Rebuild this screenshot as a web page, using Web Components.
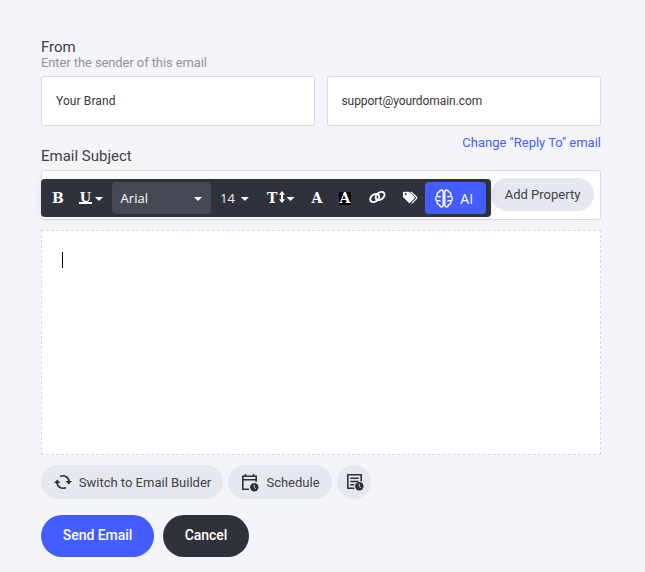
<!DOCTYPE html>
<html lang="en"><head><meta charset="utf-8"><title>Compose email</title>
<style>
html,body{margin:0;background:#f4f5fa}
body{font-family:Roboto,sans-serif;color:#3f4045}
</style></head><body>
<email-composer></email-composer>
<script>
const define=(name,html)=>customElements.define(name,class extends HTMLElement{
  constructor(){super();this.attachShadow({mode:'open'}).innerHTML=html;}
});
define('text-field',`<style>
:host{box-sizing:border-box;display:flex;align-items:center;height:50px;padding:0 14px;background:#fff;border:1px solid #d9dadd;border-radius:3px;font-size:12px;letter-spacing:.1px;color:#36373d}
</style><slot></slot>`);
define('pill-chip',`<style>
:host{box-sizing:border-box;display:flex;align-items:center;justify-content:center;height:34px;border-radius:17px;background:#e6e8f0;font-size:13px;letter-spacing:0;color:#3f4045;white-space:nowrap}
::slotted(svg){flex:none;display:block}
</style><slot></slot>`);
define('action-button',`<style>
:host{box-sizing:border-box;display:flex;align-items:center;justify-content:center;height:42px;border-radius:21px;color:#fff;font-size:14px;font-weight:500;letter-spacing:-.05px;padding-bottom:2px}
:host([kind=primary]){background:#435dff;width:113px}
:host([kind=dark]){background:#2f323b;width:86px}
</style><slot></slot>`);
define('caret-down',`<style>:host{display:block;width:8px;height:4px;background:#fff;clip-path:polygon(0 0,100% 0,50% 100%);flex:none;position:relative;top:1px}</style>`);
define('format-toolbar',`<style>
:host{box-sizing:border-box;display:flex;align-items:center;width:450px;height:38px;padding:3px 5px 3px 0;background:#2f323b;border-radius:4px;color:#fff;font-family:"Open Sans","Noto Sans",sans-serif;font-size:13px;box-shadow:0 1px 10px rgba(0,0,0,.08)}
.g{font:bold 14px/14px "DejaVu Serif",serif;display:block}
.cell{display:flex;align-items:center;box-sizing:border-box;flex:none}
.b{width:38px;padding-left:11px}.u{width:33px;gap:3px}
.u .g{width:13px;text-align:center;font-size:13px;line-height:9px;height:9px;border-bottom:2px solid #fff}
.font{width:99px;height:32px;padding:0 9px 0 8.600px;justify-content:space-between;background:#454953;border-radius:4px}
.size{width:56px;padding-left:9px;gap:6px;color:#eee}
.height{width:44px;gap:1px}.height .g{width:11px}.height svg{margin-left:-.5px}.height caret-down{margin-left:1px}
.a{width:28px;padding-left:.5px}.h{width:29px}.h .g{background:#000;width:12px;text-align:center;height:13px;line-height:13px}
.link{width:34px;padding-left:1px}.tag{width:23px;padding-left:1px}
.cell svg{position:relative;top:-1px}
.cell.ai svg{top:0}
.ai{width:61px;height:32px;border-radius:4px;background:#435dff;justify-content:center;gap:7px;font-size:14px;padding-right:2.500px}
svg{display:block;flex:none}
</style>
<div class="cell b"><span class="g">B</span></div>
<div class="cell u"><span class="g">U</span><caret-down></caret-down></div>
<div class="cell font"><span>Arial</span><caret-down></caret-down></div>
<div class="cell size"><span>14</span><caret-down></caret-down></div>
<div class="cell height"><span class="g">T</span><svg width="6" height="12" viewBox="0 0 6 12" fill="#fff"><path d="M3 0 6 3.800H4v4.400h2L3 12 0 8.200h2V3.800H0z"/></svg><caret-down></caret-down></div>
<div class="cell a"><span class="g">A</span></div>
<div class="cell h"><span class="g">A</span></div>
<div class="cell link"><svg width="17" height="14" viewBox="0 0 17 14" fill="none" stroke="#fff" stroke-width="2"><ellipse cx="5.700" cy="8" rx="4.900" ry="3.500" transform="rotate(-38 5.700 8)"/><ellipse cx="11.100" cy="6" rx="4.900" ry="3.500" transform="rotate(-38 11.100 6)"/></svg></div>
<div class="cell tag"><svg width="15" height="13" viewBox="0 0 15 13"><path fill="#fff" fill-rule="evenodd" d="M0 1.500Q0 .7.8.7h4.900q.6 0 1 .4l4.900 4.800q.7.700 0 1.400l-4.400 4.500q-.7.700-1.400 0l-5.300-5.200Q0 6.300 0 5.700zM2.700 2.300a1 1 0 1 0 0 2 1 1 0 0 0 0-2z"/><path fill="none" stroke="#fff" stroke-width="1.200" d="M7.900.9 13.400 6q.8.800 0 1.600L8.800 12.300"/></svg></div>
<div class="cell ai"><svg width="18" height="19" viewBox="0 0 18 19" fill="none" stroke="#fff" stroke-width="1.400" stroke-linecap="round" stroke-linejoin="round"><path d="M8.200 3.200C8.200.3 4.700.2 4.500 2.900 2.500 3.100 1.600 4.800 2.300 6.500.2 7.700.2 11 2.200 12.100 1.600 14.200 2.800 15.500 4.500 15.600 4.800 18.600 8.200 18.500 8.200 15.700zM9.800 3.200C9.800.3 13.300.2 13.500 2.900c2 .2 2.900 1.900 2.200 3.600 2.100 1.200 2.100 4.500.1 5.600.6 2.100-.6 3.400-2.300 3.500-.3 3-3.700 2.900-3.700.1zM2.300 6.500C3.100 7.900 4.200 8 5.200 7.500M15.700 6.500c-.8 1.400-1.900 1.500-2.900 1M2.200 12.100c.9-.8 2.100-.8 2.900 0M15.800 12.100c-.9-.8-2.100-.8-2.900 0"/></svg><span>AI</span></div>`);
define('email-composer',`<style>
:host{box-sizing:border-box;display:block;width:645px;height:572px;padding:37px 44px 0 41px;background:#f4f5fa}
h2{margin:0;font-size:15px;line-height:20px;font-weight:400;color:#3f4045}
.hint{font-size:13px;line-height:12px;letter-spacing:-.1px;color:#929396;height:19px}
.senders{display:grid;grid-template-columns:1fr 1fr;gap:12px}
.address{letter-spacing:-.07px;padding-left:13.500px}
.reply{display:flex;justify-content:flex-end;font-size:13px;line-height:16px;color:#435dff;padding-top:9px;height:11px}
.subject{position:relative;margin-top:4px}
.subject text-field{justify-content:flex-end;padding-right:6px}
.prop{width:103px;height:33px;margin-bottom:1px}
format-toolbar{position:absolute;left:0;top:9px}
.editor{box-sizing:border-box;height:225px;margin-top:10px;background:#fff;border:1px dashed #d9dadd;padding:21px 20px}
.caret{width:1px;height:16px;background:#000}
.tools{display:flex;gap:5px;margin-top:10px}
.switch{width:182px;gap:7px;padding-left:1px}.schedule{width:104px;gap:7px;padding-left:1px}.list{width:34px;padding-left:1px}
.actions{display:flex;gap:9px;margin-top:16px}
</style>
<h2>From</h2><div class="hint">Enter the sender of this email</div>
<div class="senders"><text-field>Your Brand</text-field><text-field class="address">support@yourdomain.com</text-field></div>
<div class="reply">Change "Reply To" email</div>
<h2>Email Subject</h2>
<div class="subject"><text-field><pill-chip class="prop">Add Property</pill-chip></text-field><format-toolbar></format-toolbar></div>
<div class="editor"><div class="caret"></div></div>
<div class="tools">
<pill-chip class="switch"><svg width="18" height="16" viewBox="0 0 18 16" fill="none" stroke="#303136" stroke-width="1.700"><path d="M6.200 2.500A6 6 0 0 1 15 8M11.800 13.500A6 6 0 0 1 3 8"/><path fill="#303136" stroke="none" d="M11.500 7H18l-3.250 3.500zM0 9h6.500L3.250 5.500z"/></svg><span>Switch to Email Builder</span></pill-chip>
<pill-chip class="schedule"><svg width="18" height="19" viewBox="0 0 18 19"><path fill="none" stroke="#303136" stroke-width="1.600" d="M8 16.200H1.800V3.300h13.400v5.500M1.800 6.700h13.400M4.500 1v3M12.500 1v3"/><circle cx="13.300" cy="14.300" r="4.200" fill="#303136"/><path d="M13.300 11.700v2.700l1.600 1.600" fill="none" stroke="#e6e8f0" stroke-width=".8"/></svg><span>Schedule</span></pill-chip>
<pill-chip class="list"><svg width="18" height="18" viewBox="0 0 18 18"><path fill="none" stroke="#303136" stroke-width="1.600" d="M8.300 15.200H1.800V1.800h13.400v6.500M4.300 5.200h8.400M4.300 8.500h8.400M4.300 11.800h4"/><circle cx="13.300" cy="13.300" r="4.200" fill="#303136"/><path d="M13.300 10.700v2.700l1.600 1.600" fill="none" stroke="#e6e8f0" stroke-width=".8"/></svg></pill-chip>
</div>
<div class="actions"><action-button kind="primary">Send Email</action-button><action-button kind="dark">Cancel</action-button></div>`);
</script></body></html>
